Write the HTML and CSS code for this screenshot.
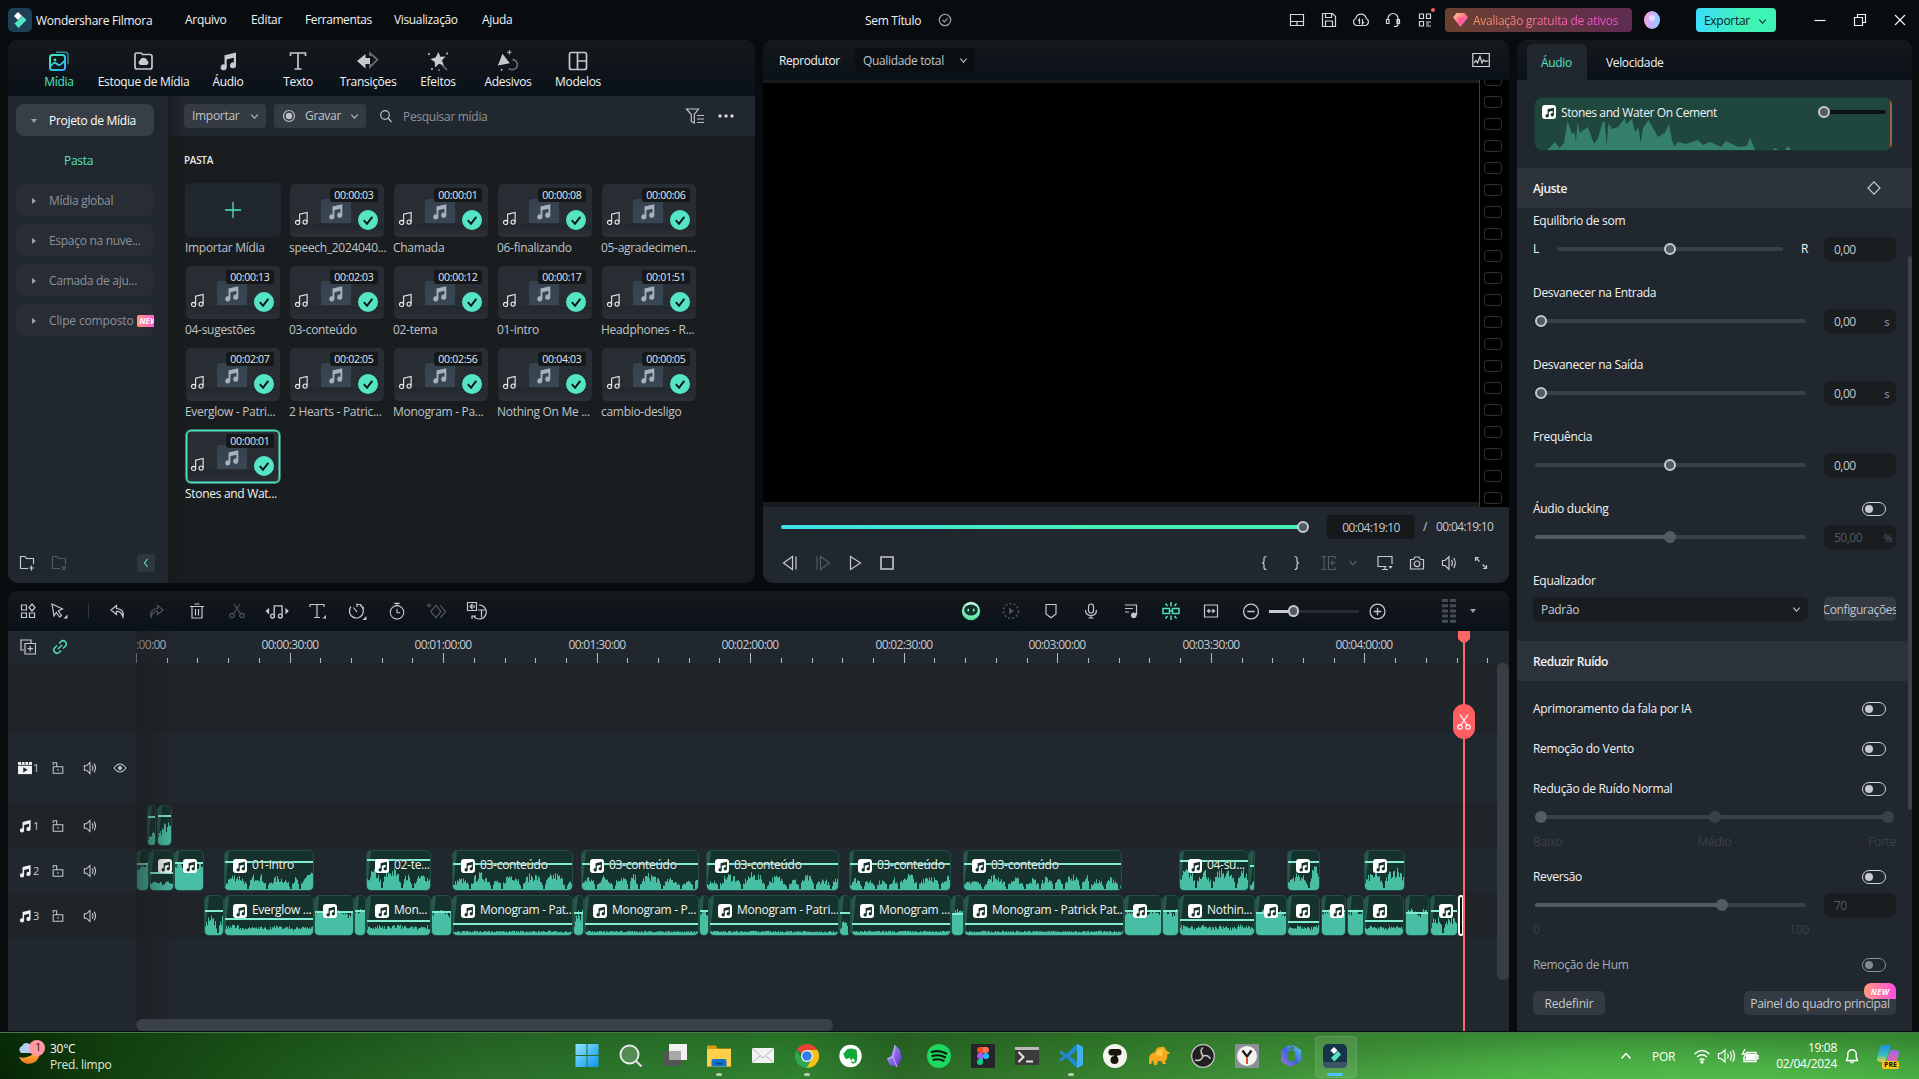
FILE: index.html
```html
<!DOCTYPE html>
<html lang="pt-BR">
<head>
<meta charset="utf-8">
<title>Wondershare Filmora</title>
<link rel="stylesheet" href="styles.css">
</head>
<body>
<svg class="sprite" aria-hidden="true">
  <defs>
    <linearGradient id="gMedia" x1="0" y1="0" x2="1" y2="1"><stop offset="0" stop-color="#3cf0b8"/><stop offset="1" stop-color="#35a7ff"/></linearGradient>
    <linearGradient id="gGem" x1="0" y1="0" x2="1" y2="1"><stop offset="0" stop-color="#ffd08a"/><stop offset=".5" stop-color="#ff6f91"/><stop offset="1" stop-color="#f63fd0"/></linearGradient>
    <linearGradient id="gMoon" x1="0" y1="0" x2="0" y2="1"><stop offset="0" stop-color="#ffc24a"/><stop offset="1" stop-color="#f07a1c"/></linearGradient>
    <linearGradient id="gWin" x1="0" y1="0" x2="1" y2="1"><stop offset="0" stop-color="#8fe6ff"/><stop offset="1" stop-color="#0b93f0"/></linearGradient>
    <linearGradient id="gObs" x1="0" y1="0" x2="1" y2="1"><stop offset="0" stop-color="#c0a4ff"/><stop offset="1" stop-color="#5a2fd0"/></linearGradient>
    <linearGradient id="gM365" x1="0" y1="1" x2="1" y2="0"><stop offset="0" stop-color="#b070e8"/><stop offset=".5" stop-color="#3f63d8"/><stop offset="1" stop-color="#5fd0f0"/></linearGradient>
    <linearGradient id="gCopA" x1="0" y1="0" x2="0" y2="1"><stop offset="0" stop-color="#1f8fe8"/><stop offset=".6" stop-color="#37c0c0"/><stop offset="1" stop-color="#e8d23a"/></linearGradient>
    <linearGradient id="gCopB" x1="0" y1="0" x2="0" y2="1"><stop offset="0" stop-color="#9a6be8"/><stop offset="1" stop-color="#ff5f9a"/></linearGradient>
    <radialGradient id="gBot" cx=".5" cy=".3" r=".8"><stop offset="0" stop-color="#ffffff"/><stop offset=".6" stop-color="#7df0b8"/><stop offset="1" stop-color="#2fd08a"/></radialGradient>
  </defs>
  <symbol id="chev" viewBox="0 0 10 10"><path d="M1.500 3 5 7l3.500-4"/></symbol>
  <symbol id="note" viewBox="0 0 20 20"><path class="f" d="M6.500 4.200 18 1.500v12.800a3 3 0 1 1-2.200-2.900V6.800L8.700 8.500v7.800a3 3 0 1 1-2.200-2.900z"/></symbol>
  <symbol id="noteo" viewBox="0 0 16 16"><path d="M6 12V3.500L14 1.500V11.500"/><circle cx="3.800" cy="12.200" r="2.200"/><circle cx="11.800" cy="11.800" r="2.200"/></symbol>
  <symbol id="check" viewBox="0 0 20 20"><circle cx="10" cy="10" r="10" fill="#55e5c5" stroke="none"/><path d="m5.800 10.200 3.200 3.600 5.300-7" fill="none" stroke="#0c1512" stroke-width="2"/></symbol>
  <symbol id="lock" viewBox="0 0 16 16"><path d="M2.500 6.500h11v7.500h-11zM2.500 4.500V2H6.500v4M8 9.200v2"/></symbol>
  <symbol id="spk" viewBox="0 0 16 16"><path d="M1.500 5.500H4l4-3.800v12.600L4 10.500H1.500zM10.500 5q1.800 3 0 6M12.700 3q3.200 5 0 10"/></symbol>
  <symbol id="headph" viewBox="0 0 16 16"><path d="M3 8V6.500a5 5 0 0 1 10 0v6q0 2-4 2M1.500 7.500H4v4H1.500zM12 7.500h2.500v4H12z"/></symbol>
</svg>

<header class="titlebar">
  <svg class="logo" viewBox="0 0 24 24"><rect width="24" height="24" rx="5" fill="#1f3f56"/><path d="m10 4 4 4-4 4-4-4z" fill="#fff"/><path d="m14.500 8 4 4-8 8-4-4.500z" fill="#52e5c2"/></svg>
  <span class="brand">Wondershare Filmora</span>
  <nav class="menu"><span>Arquivo</span><span>Editar</span><span>Ferramentas</span><span>Visualização</span><span>Ajuda</span></nav>
  <div class="doc"><span>Sem Título</span><svg class="i" width="14" height="14" viewBox="0 0 14 14"><circle cx="7" cy="7" r="5.700"/><path d="m4.600 7 1.800 1.800 3.200-3.500"/></svg></div>
  <div class="tools">
    <svg class="i" viewBox="0 0 16 16"><path d="M1.500 2.500h13v11h-13zM1.500 9.500h13M8 9.500v4"/></svg>
    <svg class="i" viewBox="0 0 16 16"><path d="M1.500 1.500h10l3 3v10h-13zM4.500 1.500v4h6v-4M4.500 14.500V9h7v5.500"/></svg>
    <svg class="i" viewBox="0 0 16 16"><path d="M3.500 13.500A3.700 3.700 0 0 1 2.800 6.500a5.300 5.300 0 0 1 10.400 0 3.700 3.700 0 0 1-.7 7zM6.500 12V7L5 9M9.500 7v5l1.500-2"/></svg>
    <svg class="i"><use href="#headph"/></svg>
    <span class="dotwrap"><svg class="i" viewBox="0 0 16 16"><path d="M2.500 2h4v4.500h-4zM9.500 2h4v4.500h-4zM2.500 9.500h4V14h-4zM9 10h5M9 12h3M9 14h5"/></svg><b></b></span>
  </div>
  <div class="trial"><svg width="15" height="14" viewBox="0 0 15 14"><path d="M3.500 0h8L15 4.500 7.500 14 0 4.500z" fill="url(#gGem)"/><path d="M4 4.500h7l-3.500 7z" fill="#ff4fa0" opacity=".6"/></svg><span>Avaliação gratuita de ativos</span></div>
  <div class="avatar"></div>
  <div class="export">Exportar<svg class="i" width="9" height="9"><use href="#chev"/></svg></div>
  <div class="winbtns">
    <svg class="i" viewBox="0 0 14 14"><path d="M1.500 7.500h11"/></svg>
    <svg class="i" viewBox="0 0 14 14"><path d="M1.500 4.500h8v8h-8zM4.500 4.500v-3h8v8h-3"/></svg>
    <svg class="i" viewBox="0 0 14 14"><path d="m2 2 10 10M12 2 2 12"/></svg>
  </div>
</header>

<main class="work">
  <section class="panel library">
    <nav class="tabs">
      <div class="tab on"><svg viewBox="0 0 22 22"><rect x="2" y="5" width="15" height="15" rx="2.500" fill="none" stroke="url(#gMedia)" stroke-width="2"/><path d="M8 2.200h9q3 0 3 3v9" fill="none" stroke="#2b8f8c" stroke-width="1.400"/><path d="M3 16q3-5 6-2t7-3" fill="none" stroke="url(#gMedia)" stroke-width="1.800"/><circle cx="7" cy="10" r="1.400" fill="#3ce0c8"/></svg><span>Mídia</span></div>
      <div class="tab wide"><svg viewBox="0 0 22 22"><path class="s" d="M2 4.500Q2 3 3.500 3H8l1.500 1.500h7.500q2 0 2 2V17q0 2-2 2H4q-2 0-2-2z"/><path class="f" d="M7.500 15a2.300 2.300 0 0 1-.6-4.400 3.700 3.700 0 0 1 7.200 0 2.300 2.300 0 0 1-.6 4.400z"/></svg><span>Estoque de Mídia</span></div>
      <div class="tab"><svg viewBox="0 0 20 20"><use href="#note"/></svg><span>Áudio</span></div>
      <div class="tab"><svg viewBox="0 0 22 22"><path class="s" d="M3.500 6V3h15v3M11 3v16M7.500 19h7"/></svg><span>Texto</span></div>
      <div class="tab"><svg class="xl" viewBox="0 0 24 22"><path class="s dim" d="M14 6V3l7.500 6.500L14 17v-3"/><path class="f" d="M9.500 4v4h4.500v6H9.500v4.500L1 11z"/></svg><span>Transições</span></div>
      <div class="tab"><svg viewBox="0 0 22 22"><path class="f" d="m11.500 2 1.800 4.800 5.200-.3-3.600 4 2.100 5-5-1.700L8 17.500l-.2-5.500-4.300-3 5-1.500z"/><path class="s dim" d="m15 15 5 5"/><g class="f"><circle cx="2" cy="4" r="1"/><circle cx="20" cy="3.500" r="1"/><circle cx="5" cy="19" r="1"/><circle cx="12" cy="20" r=".8"/></g></svg><span>Efeitos</span></div>
      <div class="tab"><svg class="xl" viewBox="0 0 24 24"><path class="f" d="M6 4 14 14.500 1 17z"/><path class="s dim" d="M17 10.500a5.500 5.500 0 1 1-4 9.500"/><circle class="f" cx="5" cy="21.500" r="1"/><path class="s thin" d="M13.500 0v5M11 2.500h5"/></svg><span>Adesivos</span></div>
      <div class="tab"><svg viewBox="0 0 22 22"><rect class="s" x="2.500" y="2.500" width="17" height="17" rx="2"/><path class="s" d="M10.500 3v16M11 11h8" /></svg><span>Modelos</span></div>
    </nav>
    <div class="libbody">
      <aside class="side">
        <div class="item sel"><i class="tri dn"></i>Projeto de Mídia</div>
        <div class="item plain">Pasta</div>
        <div class="item"><i class="tri"></i>Mídia global</div>
        <div class="item"><i class="tri"></i>Espaço na nuve...</div>
        <div class="item"><i class="tri"></i>Camada de aju...</div>
        <div class="item"><i class="tri"></i>Clipe composto<em>NEW</em></div>
        <div class="sidefoot">
          <svg class="i" viewBox="0 0 16 16"><path d="M9 13.500H1.500v-12H6l1.500 2h7V9M12.500 10.500v5M10 13h5"/></svg>
          <svg class="i off" viewBox="0 0 16 16"><path d="M9 13.500H1.500v-12H6l1.500 2h7V9M11 11l3.500 4M14.500 11 11 15"/></svg>
          <span class="collapse"><svg class="i" viewBox="0 0 10 10"><path d="M6.500 1 3.500 5l3 4"/></svg></span>
        </div>
      </aside>
      <div class="media">
        <div class="mbar">
          <div class="btn imp">Importar<svg class="i" width="9" height="9"><use href="#chev"/></svg></div>
          <div class="btn rec"><svg class="i" width="14" height="14" viewBox="0 0 14 14"><circle cx="7" cy="7" r="5.500"/><circle cx="7" cy="7" r="3.200" class="f"/></svg>Gravar<svg class="i" width="9" height="9"><use href="#chev"/></svg></div>
          <svg class="i mag" width="14" height="14" viewBox="0 0 14 14"><circle cx="6" cy="6" r="4.300"/><path d="m9 9 3.500 4"/></svg>
          <span class="ph">Pesquisar mídia</span>
          <svg class="i filt" width="20" height="18" viewBox="0 0 20 18"><path d="M1.500 2h12L9.300 7.500V16l-3-1.500v-7zM12 8.500h7M12 12h7M12 15.500h7"/></svg>
          <svg class="dots" width="18" height="6" viewBox="0 0 18 6"><circle cx="3" cy="3" r="1.700"/><circle cx="9" cy="3" r="1.700"/><circle cx="15" cy="3" r="1.700"/></svg>
        </div>
        <h3>PASTA</h3>
        <div class="grid" id="grid">
          <div class="cell"><div class="thumb add"><svg width="18" height="18" viewBox="0 0 18 18"><path d="M9 1v16M1 9h16"/></svg></div><p>Importar Mídia</p></div>
        </div>
      </div>
    </div>
  </section>

  <section class="panel player">
    <div class="phead"><b>Reprodutor</b><div class="qual">Qualidade total<svg class="i" width="9" height="9"><use href="#chev"/></svg></div><svg class="i scope" width="18" height="16" viewBox="0 0 18 16"><path d="M.8 1.500h16.500v13H.8z"/><path d="m2 11 2-2.500 1.500 2.500L8 4.500l2 6.500 1.500-3 2 1.500 3-1"/></svg></div>
    <div class="screen"><svg class="film" width="30" height="427"><defs><pattern id="perf" width="30" height="22" patternUnits="userSpaceOnUse" y="-6"><rect x="5.500" y=".5" width="17" height="11" rx="3" fill="none" stroke="#303335"/></pattern></defs><rect width="30" height="427" fill="url(#perf)"/><path d="M.5 0v427" stroke="#3c3f41"/></svg></div>
    <div class="pctl">
      <div class="seek"><div class="bar"><i></i></div><span class="tc">00:04:19:10</span><span class="sl">/</span><span class="num">00:04:19:10</span></div>
      <div class="keys">
        <svg class="i" viewBox="0 0 16 16"><path d="M10.500 1.500v13L1.500 8zM14 1.500v13"/></svg>
        <svg class="i off" viewBox="0 0 16 16"><path d="M5.500 1.500v13L14.500 8zM2 1.500v13"/></svg>
        <svg class="i" viewBox="0 0 16 16"><path d="M3.500 1.500v13L13.500 8z"/></svg>
        <svg class="i b" viewBox="0 0 16 16"><path d="M2 2h12v12H2z"/></svg>
        <span class="sp"></span>
        <svg class="i" viewBox="0 0 16 16"><path d="M10.500 1.500q-2.500 0-2.500 2v2.500q0 2-2 2 2 0 2 2v2.500q0 2 2.500 2"/></svg>
        <svg class="i" viewBox="0 0 16 16"><path d="M6.500 1.500q2.500 0 2.500 2v2.500q0 2 2 2-2 0-2 2v2.500q0 2-2.500 2"/></svg>
        <svg class="i off" viewBox="0 0 16 16"><path d="M1.500 1.500h5M4 1.500v13M1.500 14.500h5M15 4V1.500H8.500v13H15V12M15.500 8H11m2-2-2 2 2 2"/></svg>
        <svg class="i off sm" viewBox="0 0 10 10"><use href="#chev"/></svg>
        <svg class="i" viewBox="0 0 16 16"><path d="M9.500 11.500H1V1.500h14V9M8 11.500V14M5 14.500h6"/><path class="f" d="M11.500 11h4l-2 3z"/></svg>
        <svg class="i" viewBox="0 0 16 16"><path d="M1.500 4.500h3l1.500-2.500h4l1.500 2.500h3v9.500h-13z"/><circle cx="8" cy="8.800" r="2.800"/></svg>
        <svg class="i"><use href="#spk"/></svg>
        <svg class="i" viewBox="0 0 16 16"><path d="M2.500 6V2.500H6M2.500 2.500l4 4M13.500 10v3.500H10M13.500 13.500l-4-4"/></svg>
      </div>
    </div>
  </section>

  <section class="panel props">
    <nav class="ptabs"><span class="on">Áudio</span><span>Velocidade</span></nav>
    <div class="pbody">
      <div class="clipcard">
        <svg class="wavebg" width="358" height="52" viewBox="0 0 358 52"><path d="M12.500 52 20 44l4.700 6L29 45l3.500-22L37 36l2.400-2L41 44l1.400-19L45 35l3.500-3L53 29l6 17 4-6 5-17 2 2 1.500 24 2-24L77 31l6-2 7-9 1 6 6-5 3 13 3.500-4 2.200 15L108 30l5.500-8L123 39l6.500-4 4.500-9 3 16 2.400 7 3.100-5 8.500 2 12-4 5 5 7-3 11 5 5-6 12 6 9-1 3-8 3 7 2 5zM238 52l2-2 4 2zM250 52l3-4 3 4z"/></svg>
        <span class="mi"><svg viewBox="0 0 20 20"><use href="#note"/></svg></span><span class="cn">Stones and Water On Cement</span><span class="vol"><i></i></span>
        <span class="edge"></span>
      </div>
      <h4>Ajuste<svg class="i" width="16" height="16" viewBox="0 0 16 16"><path d="m8 1.800 6 6.200-6 6.200L2 8z"/></svg></h4>
      <div class="prop"><label>Equilíbrio de som</label><div class="row"><small>L</small><div class="sld bal"><i style="left:50%"></i></div><small class="r">R</small><span class="val">0,00</span></div></div>
      <div class="prop"><label>Desvanecer na Entrada</label><div class="row"><div class="sld"><i style="left:2.200%"></i></div><span class="val">0,00<u>s</u></span></div></div>
      <div class="prop"><label>Desvanecer na Saída</label><div class="row"><div class="sld"><i style="left:2.200%"></i></div><span class="val">0,00<u>s</u></span></div></div>
      <div class="prop"><label>Frequência</label><div class="row"><div class="sld"><i style="left:49.800%"></i></div><span class="val">0,00</span></div></div>
      <div class="prop dis"><label>Áudio ducking<s></s></label><div class="row"><div class="sld"><q style="width:50%"></q><i style="left:49.800%"></i></div><span class="val">50,00<u>%</u></span></div></div>
      <div class="prop"><label>Equalizador</label><div class="row eq"><div class="select">Padrão<svg class="i" width="9" height="9"><use href="#chev"/></svg></div><span class="cfg">Configurações</span></div></div>
      <h4 class="second">Reduzir Ruído</h4>
      <div class="tg first">Aprimoramento da fala por IA<s></s></div>
      <div class="tg">Remoção do Vento<s></s></div>
      <div class="tg">Redução de Ruído Normal<s></s></div>
      <div class="steps"><i></i><i></i><i></i></div>
      <div class="marks"><span>Baixo</span><span>Médio</span><span>Forte</span></div>
      <div class="tg rev">Reversão<s></s></div>
      <div class="row dis low"><div class="sld"><q style="width:69%"></q><i style="left:69%"></i></div><span class="val">70</span></div>
      <div class="marks short"><span>0</span><span>100</span></div>
      <div class="tg hum">Remoção de Hum<s></s></div>
      <div class="scroll"></div>
    </div>
    <footer class="pfoot"><span>Redefinir</span><span class="kf">Painel do quadro principal<em>NEW</em></span></footer>
  </section>

  <section class="panel timeline">
    <div class="tbar">
      <svg class="i n" viewBox="0 0 16 16"><path d="M1.500 2h5v5h-5zM1.500 10h5v4.500h-5zM9.500 10h5v4.500h-5zM12 1l3 3.500-3 3.500-3-3.500z"/></svg>
      <svg class="i n" viewBox="0 0 18 16"><path d="m1 1 10.500 5-4.200 2 3.200 4.500-2 1.500-3.200-4.500L3 13z"/><path class="f" d="M16.500 11.500v4h-4z"/></svg>
      <i class="vr"></i>
      <svg class="i" viewBox="0 0 16 16"><path d="M7.500 2.500 2 7l5.500 4.500v-3q4.500-.5 6.500 5.500 1.500-8-6.500-8.500z"/></svg>
      <svg class="i off" viewBox="0 0 16 16"><path d="M8.500 2.500 14 7l-5.500 4.500v-3q-4.500-.5-6.500 5.500-1.500-8 6.500-8.500z"/></svg>
      <svg class="i" viewBox="0 0 16 16"><path d="M1 3.500h14M5.500 1h5M3 3.500V15h10V3.500M6.500 6v6.500M9.500 6v6.500"/></svg>
      <svg class="i off" viewBox="0 0 16 16"><circle cx="3" cy="12.500" r="2.200"/><circle cx="13" cy="12.500" r="2.200"/><path d="M4.500 10.500 11 1M11.500 10.500 5 1"/></svg>
      <svg class="i big" viewBox="0 0 22 16"><path d="M8.500 12V3.500h7V12"/><circle cx="7" cy="12.500" r="1.700"/><circle cx="14" cy="12.500" r="1.700"/><path class="f" d="M4 5v6L.8 8zM18.500 5v6l3-3z"/></svg>
      <svg class="i" viewBox="0 0 18 16"><path d="M2 4V1.500h14V4M9 1.500v12.500M6 14.500h6"/><path class="f" d="M18 12v3.500h-3.500z"/></svg>
      <svg class="i big" viewBox="0 0 20 18"><path d="M4 4.500A7 7 0 1 0 10 2v3M10 10 6.500 5.500"/><path d="M13 2.500a7 7 0 0 1 4 5" stroke-dasharray="2 1.500"/><path class="f" d="M19.500 14v4h-4z"/></svg>
      <svg class="i big" viewBox="0 0 18 20"><circle cx="9" cy="11.500" r="7.500"/><path d="M6 1.500h6M9 1.500v3M9 7.500v4.500h3.500"/></svg>
      <svg class="i off big" viewBox="0 0 20 16"><path d="m9 3 4.500 5.500L9 14 4.500 8.500zM13 3l4.500 5.500L13 14M1 3h4M3 1v4"/></svg>
      <svg class="i huge" viewBox="0 0 24 22"><path d="M2.500 2.500h9v8h-9zM7 4.500 5 6.500l2 2zM9 5v3"/><path d="M14 5a7 7 0 1 1-5.500 11M11 16H7v3M13 10h7M16.500 10v7"/></svg>
      <span class="sp"></span>
      <svg class="huge" viewBox="0 0 24 24"><circle cx="12" cy="12" r="10" fill="url(#gBot)"/><ellipse cx="12" cy="11" rx="7.500" ry="6" fill="#12332b"/><path d="M9 9.500v3M15 9.500v3" stroke="#7dffc8" stroke-width="1.600"/></svg>
      <svg class="i off big" viewBox="0 0 18 18"><circle cx="9" cy="9" r="7.500" stroke-dasharray="2 2.200" stroke-width="1.600"/><path class="f" d="M7 5.500 12 9l-5 3.500z"/></svg>
      <svg class="i" viewBox="0 0 16 16"><path d="M3 1.500h10V11l-5 3.800L3 11z"/></svg>
      <svg class="i" viewBox="0 0 16 16"><rect x="5.500" y="1" width="5" height="9" rx="2.500"/><path d="M2.500 7q0 5.500 5.500 5.500T13.500 7M8 12.500V15M5.500 15h5"/></svg>
      <svg class="i" viewBox="0 0 16 16"><path d="M2 2h11M2 5.500h8M2 9h4M13.500 1.500V12"/><circle class="f" cx="10.800" cy="12.200" r="2.800"/></svg>
      <svg class="i grn big" viewBox="0 0 18 18"><path d="M1 6.500h6.500v5H1zM10.500 6.500H17v5h-6.500zM7 9h4M9 0v4.500M9 13.500V18M3.500 1.500l2 2.500M14.500 1.500l-2 2.500M3.500 16.500l2-2.500M14.500 16.500l-2-2.500" stroke-width="1.500"/></svg>
      <svg class="i" viewBox="0 0 16 16"><path d="M1.500 2h13v12h-13z"/><path class="f" d="M6.500 5.500v5L3.500 8zM9.500 5.500v5l3-2.500z"/><path d="M6 8h4"/></svg>
      <svg class="i zo" viewBox="0 0 16 16"><circle cx="8" cy="8" r="7"/><path d="M4.500 8h7"/></svg>
      <div class="zoom"><q></q><i></i></div>
      <svg class="i zi" viewBox="0 0 16 16"><circle cx="8" cy="8" r="7"/><path d="M4.500 8h7M8 4.500v7"/></svg>
      <svg class="meter" width="14" height="24" viewBox="0 0 14 24"><path d="M3 0v24M11 0v24" stroke="#454b52" stroke-width="6" stroke-dasharray="3 2.200"/></svg>
      <i class="tri dn"></i>
    </div>
    <div class="tbody">
      <div class="heads">
        <div class="h0"><svg class="i" viewBox="0 0 16 16"><path d="M4 11H1V1h10v3M5 4.500h10.500v10.500H5zM10.200 7v5.500M7.500 9.700H13"/></svg><svg class="i grn" viewBox="0 0 16 16"><path d="M7 4.500 9 2.500a3.200 3.200 0 0 1 4.500 4.500L11 9.500M9 11.500l-2 2A3.200 3.200 0 0 1 2.500 9L5 6.500M6 10l4-4" stroke-width="1.500"/></svg></div>
        <div class="h1"></div>
        <div class="h2"><svg class="ic" viewBox="0 0 16 16"><path class="f" d="M0 1h16v14H0z"/><path d="M0 5h16M4 1v3M8 1v3M12 1v3" stroke="#21272e"/><path d="M6 7v6l5-3z" fill="#21272e"/></svg><span>1</span><svg class="i lk"><use href="#lock"/></svg><svg class="i sk"><use href="#spk"/></svg><svg class="i ey" viewBox="0 0 14 14"><path d="M1 7q6-8 12 0-6 8-12 0z"/><circle class="f" cx="7" cy="7" r="2"/></svg></div>
        <div class="h3 dk"><svg class="ic" viewBox="0 0 20 20"><use href="#note"/></svg><span>1</span><svg class="i lk"><use href="#lock"/></svg><svg class="i sk"><use href="#spk"/></svg></div>
        <div class="h3"><svg class="ic" viewBox="0 0 20 20"><use href="#note"/></svg><span>2</span><svg class="i lk"><use href="#lock"/></svg><svg class="i sk"><use href="#spk"/></svg></div>
        <div class="h3 dk"><svg class="ic" viewBox="0 0 20 20"><use href="#note"/></svg><span>3</span><svg class="i lk"><use href="#lock"/></svg><svg class="i sk"><use href="#spk"/></svg></div>
      </div>
      <div class="lanes">
        <div class="ruler" id="ruler"></div>
        <div class="lane empty"></div>
        <div class="lane video"></div>
        <div class="lane dk" id="a1"></div>
        <div class="lane" id="a2"></div>
        <div class="lane dk" id="a3"></div>
        <div class="shade"></div>
        <div class="vs"></div>
        <div class="hs"></div>
        <div class="playhead"><svg class="ph1" width="12" height="14" viewBox="0 0 12 14"><path d="M0 0h12v8l-6 5-6-5z"/></svg><span class="cut"><svg width="16" height="18" viewBox="0 0 16 18"><circle cx="4" cy="14" r="2.200"/><circle cx="12" cy="14" r="2.200"/><path d="M5 12 12 1.500M11 12 4 1.500"/></svg></span></div>
      </div>
    </div>
  </section>
</main>

<footer class="taskbar">
  <div class="weather"><svg width="30" height="30" viewBox="0 0 30 30"><path d="M22 9a9.500 9.500 0 1 1-20 8q10 3 20-8z" fill="url(#gMoon)"/><path d="M4 13a4 4 0 0 1 1-7 5 5 0 0 1 9-.5 4 4 0 0 1 1 7.500z" fill="#b9cdf2"/><circle cx="20" cy="8" r="8" fill="#ff9aa2"/></svg><b>1</b><div><p>30°C</p><p>Pred. limpo</p></div></div>
  <div class="apps">
    <span><svg viewBox="0 0 24 24"><path d="M.500 0h11v11H.500zM12.500 0h11v11h-11zM.500 12h11v11H.500zM12.500 12h11v11h-11z" fill="url(#gWin)"/></svg></span>
    <span><svg viewBox="0 0 24 24"><circle cx="10.500" cy="10.500" r="9" fill="#ffffff33" stroke="#e6ebe6" stroke-width="2"/><path d="m17 17 5.500 5.500" stroke="#d8d8d8" stroke-width="2.400"/></svg></span>
    <span><svg viewBox="0 0 24 24"><path d="M0 7h18v15H0z" fill="#555"/><path d="M6 0h18v16H6z" fill="#f1f1f1"/><path d="M6 7h12v9H6z" fill="#a8a8a8"/></svg></span>
    <span class="run"><svg viewBox="0 0 24 24"><path d="M0 1.500h9l1.500 3H24v18H0z" fill="#d99a10"/><path d="M0 5h24v17.500H0z" fill="#ffcf4a"/><path d="M4.500 17q0-2 2-2h11q2 0 2 2v5.500h-15z" fill="#1274d0"/><path d="M8 18.500h8v2H8z" fill="#0b4f96"/></svg></span>
    <span><svg viewBox="0 0 24 24"><path d="M1 4h22v15H1z" fill="#f3f3f3"/><path d="m1 4 11 10L23 4M1 19l8-7M23 19l-8-7" fill="none" stroke="#b5b5b5"/></svg></span>
    <span class="run"><svg viewBox="0 0 24 24"><path d="M12 12 1.600 6A12 12 0 0 1 22.400 6z" fill="#ea4335"/><path d="M12 12V6h10.400A12 12 0 0 1 12 24z" fill="#fbc116"/><path d="M1.600 6A12 12 0 0 0 11.500 24l5.500-9-5-3-5 3z" fill="#2fa84f"/><circle cx="12" cy="12" r="6" fill="#fff"/><circle cx="12" cy="12" r="4.800" fill="#2f7de8"/></svg></span>
    <span><svg viewBox="0 0 24 24"><circle cx="11.500" cy="12" r="11.200" fill="#fff"/><path d="M4.500 9.500 8.500 5q5-1.500 9 1 1.500 5 .5 10-1 4-4.500 3.500-2-1-1-3l1.500 1.500h1.500q.5-3-1.500-3.500-2 2-3 1v-2q-3 2-4.500 1-2-2-2-5z" fill="#0fa83c"/></svg></span>
    <span><svg viewBox="0 0 24 24"><path d="M12 1 17 6l1.500 9-4.500 8-7-2-3-6 4-3z" fill="url(#gObs)"/><path d="m12 1-2 12 4 10M10 13l-6 2" stroke="#d8c8ff" fill="none" stroke-width=".8"/></svg></span>
    <span><svg viewBox="0 0 24 24"><circle cx="12" cy="12" r="12" fill="#1ed760"/><path d="M4.800 8q7-2.500 14.500 1.500M5.500 12q6.500-2 12.500 1.300M6.500 15.800q5-1.500 10 1" fill="none" stroke="#0b1a10" stroke-width="2.200" stroke-linecap="round"/></svg></span>
    <span><svg viewBox="0 0 24 24"><rect width="24" height="24" rx="1" fill="#262329"/><path d="M12 3H9a3 3 0 0 0 0 6h3z" fill="#f24e1e"/><path d="M12 3h3a3 3 0 0 1 0 6h-3z" fill="#ff7262"/><path d="M12 9H9a3 3 0 0 0 0 6h3z" fill="#a259ff"/><circle cx="15" cy="12" r="3" fill="#1abcfe"/><path d="M12 15H9a3 3 0 1 0 3 3z" fill="#0acf83"/></svg></span>
    <span><svg viewBox="0 0 24 24"><path d="M0 3h24v18H0z" fill="#3a3a3a"/><path d="M0 3h24v3H0z" fill="#b9b9b9"/><path d="m3.500 8 5 5-5 5M11 17.500h7" fill="none" stroke="#e8e8e8" stroke-width="2"/></svg></span>
    <span class="run"><svg viewBox="0 0 24 24"><path d="m18 0 6 3v18l-6 3L7 13.500l-4.500 4L0 16l4.500-4L0 8l2.500-1.500 4.500 4z" fill="#1f8ad8"/><path d="M18 6.500v11L10.500 12z" fill="#2f7a2e"/><path d="m18 0 6 3v18l-6 3z" fill="#3fb0f5"/></svg></span>
    <span><svg viewBox="0 0 24 24"><circle cx="12" cy="12" r="12" fill="#f4f4ee"/><rect x="5.500" y="5" width="13" height="6.500" rx="3" fill="#17150f"/><path d="M11 11h3v3h-3z" fill="#17150f"/><circle cx="11.500" cy="16" r="4" fill="#17150f"/></svg></span>
    <span><svg viewBox="0 0 24 24"><path d="M2 16q0-7 6-8 1-5 6-5 4-1 5 3l4 3-3 2q1 4-2 6l1 3h-3l-2-3h-3l-1 4H7l-1-5-2 4H2z" fill="#f5a81c"/><path d="M9 11q1-6 7-6l-1 7z" fill="#ffc94d"/></svg></span>
    <span><svg viewBox="0 0 24 24"><circle cx="12" cy="12" r="11.300" fill="#231f20" stroke="#c8c8c8" stroke-width="1.200"/><path d="M12 3.500q-4 3 0 8.500 5-2 7.500 3M12 12q-2 6-8 4" fill="none" stroke="#c8c8c8" stroke-width="1.500"/></svg></span>
    <span><svg viewBox="0 0 24 24"><rect width="24" height="24" rx="1" fill="#8b9096"/><circle cx="12" cy="12" r="10" fill="#f1f1f1"/><path d="m7.500 6.500 4.500 6 4.500-6" fill="none" stroke="#222" stroke-width="2.400"/><path d="M12 13v7" stroke="#d8542a" stroke-width="2"/></svg></span>
    <span><svg viewBox="0 0 24 24"><path d="M10 1 2 6v11l5 4 5-3-3-2V8l7-4zM14 1l8 5v11l-10 6-5-2.500 9-4.500V8l-5-3z" fill="url(#gM365)"/></svg></span>
    <span class="act"><svg viewBox="0 0 24 24"><rect width="24" height="24" rx="5" fill="#17354a"/><path d="m11 3 3.500 3.500L11 10 7.500 6.500z" fill="#fff"/><path d="m15 7 3 3.500-6.500 7L8 14z" fill="#52e5c2"/><path d="M0 18h24v1q0 5-5 5H5q-5 0-5-5z" fill="#3b5468"/></svg></span>
  </div>
  <div class="tray">
    <svg class="w tc1" width="12" height="8" viewBox="0 0 12 8"><path d="m1.500 6.500 4.500-5 4.500 5"/></svg><span class="por">POR</span>
    <svg class="w" width="18" height="16" viewBox="0 0 18 16"><path d="M1.500 6q7.500-7 15 0M4 9q5-4.500 10 0M6.500 12q2.500-2 5 0"/><circle cx="9" cy="14" r="1" fill="#fff"/></svg>
    <svg class="w" width="18" height="16" viewBox="0 0 18 16"><path d="M1.500 5.500H4l4-3.500v12l-4-3.500H1.500zM10.500 5.500q1.500 2.500 0 5M13 3.500q3 4.500 0 9M15.500 2q4 6 0 12" stroke-width="1.200"/></svg>
    <svg class="w" width="18" height="16" viewBox="0 0 18 16"><path d="M5 4.500h10v9H3V10M15.500 7.500h1.500v3h-1.500"/><path d="M6 6.500h7.500v5H5z" fill="#fff"/><path d="M4 1 1.500 6H5L2.500 10" fill="none"/></svg>
    <div class="clock"><p>19:08</p><p>02/04/2024</p></div>
    <svg class="w bell" width="14" height="16" viewBox="0 0 14 16"><path d="M1.500 12.500 2.800 9V6a4.200 4.200 0 0 1 8.400 0v3l1.300 3.500zM5 13q2 3.500 4 0"/></svg>
    <span class="cop"><svg width="24" height="22" viewBox="0 0 24 22"><path d="M7 0h8l-5 15q-1 2-4 2-6 0-5-4L4 3q1-3 3-3z" fill="url(#gCopA)"/><path d="M17 5q6-1 6 4l-2 7q-1 5-5 5H9l4-13q1-3 4-3z" fill="url(#gCopB)"/></svg><b>PRE</b></span>
  </div>
</footer>
<script src="app.js"></script>
</body>
</html>
```
FILE: styles.css
```css
* { box-sizing: border-box; margin: 0; padding: 0; }
body { width: 1919px; height: 1079px; overflow: hidden; background: #080c0f; color: #f1f3f5; font: 12px/16px "Open Sans", "Noto Sans", sans-serif; letter-spacing: -.3px; display: flex; flex-direction: column; white-space: nowrap; }
i, em, u, s, q { font-style: normal; text-decoration: none; display: block; }
q::before, q::after { content: none; }
.sprite { position: absolute; width: 0; height: 0; }
.i { fill: none; stroke: currentColor; stroke-width: 1.2; flex: none; }
.f { fill: currentColor; stroke: none; }
.sp { flex: 1; }
.off { color: #545b62; }
.num, .tc { letter-spacing: -.64px; }
.tri { width: 0; height: 0; border: 3.5px solid transparent; border-left: 4px solid #9aa0a6; border-right: 0; flex: none; }
.tri.dn { border: 3px solid transparent; border-top: 4px solid #9aa0a6; border-bottom: 0; }

/* title bar */
.titlebar { height: 40px; flex: none; display: flex; align-items: center; padding-left: 8px; }
.logo { width: 24px; height: 24px; }
.brand { width: 149px; padding: 2px 0 0 4px; letter-spacing: -.26px; }
.menu { display: flex; gap: 24px; width: 680px; padding-left: 4px; }
.menu span:nth-child(1) { width: 42px; }
.menu span:nth-child(2) { width: 30px; }
.menu span:nth-child(3) { width: 65px; letter-spacing: -.4px; }
.menu span:nth-child(4) { width: 64px; letter-spacing: -.35px; }
.doc { display: flex; align-items: center; width: 420px; padding-left: 4px; }
.doc span { width: 73px; padding-top: 2px; }
.doc svg { color: #9ba1a7; }
.tools { display: flex; width: 164px; gap: 16px; padding-left: 8px; color: #d5d9dc; }
.tools svg { width: 16px; height: 16px; display: block; }
.dotwrap { position: relative; }
.dotwrap b { position: absolute; right: -2px; top: -4px; width: 4px; height: 4px; border-radius: 2px; background: #ff5a5f; }
.trial { width: 187px; height: 24px; border-radius: 4px; background: linear-gradient(90deg, #6a4030, #5e2c50); display: flex; align-items: center; padding-left: 8px; gap: 5px; }
.trial span { background: linear-gradient(90deg, #ff9a62, #ff6aa0 50%, #f04fe6); -webkit-background-clip: text; color: transparent; padding-top: 2px; letter-spacing: -.27px; }
.avatar { width: 16px; height: 18px; margin: 0 36px 0 12px; border-radius: 50%; background: radial-gradient(circle at 50% 40%, #fff8 20%, transparent 25%), linear-gradient(100deg, #ffa0d8, #c8b0ff 50%, #7ad8ff); }
.export { width: 80px; height: 24px; border-radius: 4px; background: linear-gradient(100deg, #3ddcff, #3ff3b4 60%); color: #10231e; display: flex; align-items: center; justify-content: space-between; padding: 2px 9px 0 8px; }
.winbtns { display: flex; gap: 26px; margin-left: 37px; }
.winbtns svg { width: 14px; height: 14px; }

/* workspace */
.work { height: 991px; flex: none; display: grid; grid-template: 543px 440px / 747px 746px 395px; gap: 8px; padding-left: 8px; }
.panel { background: #21272e; border-radius: 10px; overflow: hidden; display: flex; flex-direction: column; }
.player { grid-column: 2; }
.props { grid-column: 3; grid-row: 1 / 3; border-radius: 10px 10px 0 0; }
.timeline { grid-column: 1 / 3; grid-row: 2; border-radius: 10px 10px 0 0; }
.tabs, .phead, .ptabs, .tbar { background: linear-gradient(#15191c, #0a1119); flex: none; display: flex; }
.tabs { height: 56px; padding-left: 16px; }
.tab { width: 70px; display: flex; flex-direction: column; align-items: center; color: #f1f3f5; }
.tab.wide { width: 99px; }
.tab svg { width: 22px; height: 22px; margin: 10px 0 2px; color: #c5cad1; }
.tab svg:not([viewBox="0 0 22 22"]) { width: 20px; }
.tab svg.xl { width: 24px; }
.tab.on span { color: #50e3c2; }
.s { fill: none; stroke: currentColor; stroke-width: 1.7; }
.s.thin { stroke-width: 1; }
.dim { opacity: .5; }
.libbody { flex: 1; display: flex; }
.side { width: 160px; padding: 8px 0 0 8px; display: flex; flex-direction: column; gap: 8px; }
.item { width: 138px; height: 32px; border-radius: 8px; background: #282c34; color: #8d9399; display: flex; align-items: center; padding: 1px 0 0 16px; overflow: hidden; }
.item .tri { margin-right: 13px; }
.item .tri.dn { margin: 0 12px 0 -1px; }
.item.sel { background: #383e45; color: #fff; letter-spacing: -.3px; }
.item.plain { background: none; color: #50e3c2; padding-left: 48px; }
.item em, .kf em { background: linear-gradient(90deg, #ff9a7a, #ff4fe0); color: #fff; font: italic bold 8px/12px "Open Sans", sans-serif; letter-spacing: 0; }
.item em { padding-left: 3px; margin-left: 3px; border-radius: 2px; width: 30px; }
.item:nth-child(6) { letter-spacing: -.15px; }
.sidefoot { display: flex; align-items: center; gap: 16px; margin-top: auto; padding: 0 13px 11px 3px; color: #c5cad1; }
.sidefoot > svg { width: 16px; height: 16px; }
.sidefoot .off { color: #545b62; }
.collapse { width: 18px; height: 18px; border-radius: 3px; background: #30363d; color: #50e3c2; margin-left: auto; display: grid; place-items: center; }
.collapse svg { width: 10px; height: 10px; }
.media { flex: 1; background: linear-gradient(90deg, #16191b, #1a1d1f 16px); }
.mbar { height: 40px; background: linear-gradient(90deg, #1a1f22, #21272e 16px); display: flex; align-items: center; padding-left: 16px; color: #bfc4c9; }
.btn { height: 24px; border-radius: 4px; background: #343a41; display: flex; align-items: center; padding: 0 7px 0 8px; justify-content: space-between; }
.imp { width: 82px; margin-right: 8px; }
.rec { width: 92px; }
.mag { margin: 0 10px 0 13px; }
.ph { color: #8d9399; width: 282px; padding-top: 2px; }
.filt { margin-right: 12px; }
.dots { fill: #d5d9dc; }
h3 { font: 600 10px/16px "Open Sans", sans-serif; letter-spacing: -.3px; margin: 16px 0 15px 16px; color: #e6e9eb; }
.grid { display: grid; grid-template-columns: repeat(5, 104px); grid-auto-rows: 82px; padding-left: 18px; }
.cell { margin-left: -1px; }
.thumb { width: 94px; height: 53px; margin-left: .5px; border-radius: 5px; background: linear-gradient(#272d33 75%, #22282d 78%, #2b3137); position: relative; margin-top: 1px; }
.thumb.add { width: 96px; height: 54px; margin: 0; background: #21272e; display: grid; place-items: center; }
.add path { stroke: #50e3c2; stroke-width: 1.3; }
.thumb.sel { box-shadow: 0 0 0 1.5px #50e3c2 inset, 0 0 0 .5px #50e3c2; }
.cell p { color: #bfc4c9; padding-top: 3px; width: 100px; }
.cell p.on { color: #f1f3f5; }
.thumb .t { position: absolute; right: 6px; top: 4px; height: 14px; padding: 0 4px; border-radius: 3px; background: #15181a; font-size: 10.5px; line-height: 14px; letter-spacing: -.3px; color: #e6e9eb; }
.thumb .sq { position: absolute; left: 31px; top: 15px; width: 30px; height: 24px; border-radius: 3px 3px 1px 1px; background: linear-gradient(#36424e, #3b4754); display: grid; place-items: center; color: #a7b2bf; }
.sq svg { width: 17px; height: 17px; }
.thumb .no { position: absolute; left: 4px; top: 27px; width: 15px; height: 15px; color: #e6e9eb; }
.thumb .ck { position: absolute; right: 6px; top: 26px; width: 20px; height: 20px; }

/* player */
.phead { height: 40px; align-items: center; padding-left: 16px; }
.phead b { font-weight: 400; width: 76px; padding-top: 2px; letter-spacing: -.4px; }
.qual { width: 120px; height: 24px; border-radius: 4px; background: #0b0f12; color: #bfc4c9; display: flex; align-items: center; justify-content: space-between; padding: 1px 7px 0 8px; letter-spacing: -.35px; }
.scope { margin: 0 19px 0 auto; color: #d5d9dc; }
.screen { height: 427px; background: #000; border-top: 3px solid #181c1f; border-bottom: 5px solid #181c1f; position: relative; }
.film { position: absolute; right: 0; top: -3px; background: #000; }
.pctl { flex: 1; }
.seek { display: flex; align-items: center; height: 24px; margin-top: 8px; padding-left: 18px; color: #c5cad1; }
.bar { width: 522px; height: 4px; border-radius: 2px; background: linear-gradient(90deg, #3de0e8, #46f0b4 60%); position: relative; }
.bar i, .sld i, .vol i, .zoom i { position: absolute; width: 12px; height: 12px; border-radius: 6px; border: 2px solid #c5cad1; background: #545b62; top: 50%; margin: -6px 0 0 -6px; }
.bar i { left: 100%; }
.tc { width: 88px; height: 24px; border-radius: 4px; background: #15191c; margin-left: 24px; text-align: center; line-height: 25px; }
.sl { margin: 0 7px 0 8px; width: 6px; }
.keys { display: flex; align-items: center; height: 24px; margin-top: 12px; padding: 0 12px 0 12px; color: #c5cad1; }
.keys svg { width: 32px; height: 16px; }
.keys .b { stroke-width: 1.6; }
.keys svg:first-child { margin-right: 1px; margin-left: -1px; }
.keys .off { color: #545b62; }
.keys .sm { width: 16px; height: 10px; margin: 0 8px 0 1px; }

/* properties */
.ptabs { height: 40px; padding: 4px 0 0 10px; gap: 0; }
.ptabs span { height: 36px; line-height: 38px; padding: 0 19px; letter-spacing: -.35px; }
.ptabs .on { width: 60px; background: #21272e; color: #50e3c2; border-radius: 6px 6px 0 0; padding: 0 14px; }
.pbody { height: 895px; position: relative; overflow: hidden; letter-spacing: -.3px; }
.clipcard { width: 359px; height: 54px; margin: 17px 0 17px 17px; border-radius: 8px; background: #1f473e; border: 1px solid #17362f; position: relative; display: flex; padding: 7px 0 0 7px; overflow: hidden; }
.edge { position: absolute; right: 0; top: 0; width: 2px; height: 54px; background: #a5574d; }
.wavebg { position: absolute; left: 0; bottom: 0; fill: #35806d; }
.mi { width: 14px; height: 14px; border-radius: 3px; background: #fff; display: grid; place-items: center; flex: none; color: #14302a; position: relative; }
.mi svg { width: 11px; height: 11px; }
.clipcard .cn { margin-left: 5px; position: relative; letter-spacing: -.38px; }
.vol { position: absolute; left: 287px; top: 12px; width: 64px; height: 4px; border-radius: 2px; background: #0b1412; }
.vol i { left: 2px; }
h4 { height: 40px; background: #2d333a; padding: 0 30px 0 16px; font: 600 12px/41px "Open Sans", sans-serif; letter-spacing: -.42px; display: flex; justify-content: space-between; align-items: center; }
h4 svg { color: #c5cad1; }
h4.second { margin-top: 1px; }
.prop { height: 72px; padding-left: 16px; }
.prop label { height: 26px; line-height: 26px; display: flex; justify-content: space-between; align-items: center; padding-right: 26px; }
.row { display: flex; align-items: center; height: 30px; padding-right: 16px; }
.row small { font-size: 12px; width: 24px; }
.row .r { width: 23px; padding-left: 0; margin-left: 18px; }
.sld { width: 271px; height: 4px; border-radius: 2px; background: #3a4049; margin: 0 auto 0 2px; position: relative; }
.sld.bal { width: 226px; margin: 0; }
.sld q { height: 4px; border-radius: 2px; background: #545b62; }
.dis .sld i { background: #545b62; border-color: #545b62; }
.val { width: 72px; height: 24px; flex: none; border-radius: 5px; background: #191d20; color: #c5cad1; padding: 1px 7px 0 10px; line-height: 24px; display: flex; justify-content: space-between; letter-spacing: -.5px; }
.val u { color: #9aa0a6; font-size: 11px; }
.dis .val, .dis .val u { color: #545b62; }
.dis .val { padding-right: 4px; }
s { width: 24px; height: 14px; border: 1px solid #d0d4da; border-radius: 7px; padding: 2px; }
s::before { content: ""; display: block; width: 8px; height: 8px; border-radius: 4px; background: #c5cad1; }
.select { width: 275px; height: 24px; border-radius: 5px; background: #191d20; color: #c5cad1; display: flex; align-items: center; justify-content: space-between; padding: 1px 7px 0 8px; }
.cfg { width: 72px; height: 24px; margin-left: 16px; border-radius: 5px; background: #343a41; color: #bfc4c9; overflow: hidden; line-height: 26px; display: flex; justify-content: center; letter-spacing: -.4px; }
.tg { height: 40px; display: flex; align-items: center; justify-content: space-between; padding: 0 26px 0 16px; }
.tg.first { margin-top: 8px; }
.tg.rev { height: 36px; }
.tg.hum { color: #a8acb0; }
.hum s { opacity: .6; }
.steps { height: 4px; margin: 6px 18px; background: #3a4049; border-radius: 2px; display: flex; justify-content: space-between; align-items: center; }
.steps i { width: 12px; height: 12px; border-radius: 6px; background: #3a4049; }
.steps i:first-child { background: #545b62; }
.marks { display: flex; justify-content: space-between; height: 34px; line-height: 34px; padding: 0 16px; color: #3a4047; }
.marks span:nth-child(2) { margin-left: -2px; }
.row.low { height: 20px; padding-left: 16px; }
.marks.short { height: 30px; line-height: 30px; width: 308px; }
.scroll { position: absolute; right: 0; top: 176px; width: 4px; height: 554px; border-radius: 2px; background: #3d434b; }
.pfoot { flex: 1; display: flex; justify-content: space-between; padding: 16px 16px 0; background: #21272e; color: #c5cad1; letter-spacing: -.2px; position: relative; }
.pfoot span { height: 24px; border-radius: 5px; background: #343a41; line-height: 26px; width: 72px; text-align: center; position: relative; }
.pfoot .kf { width: 152px; letter-spacing: -.3px; }
.kf em { position: absolute; right: 0; top: -8px; width: 32px; height: 16px; border-radius: 7px 7px 0 7px; line-height: 17px; text-align: center; letter-spacing: .4px; }

/* timeline */
.tbar { height: 40px; align-items: center; padding: 0 33px 0 4px; color: #c5cad1; }
.tbar svg { width: 40px; height: 16px; flex: none; }
.tbar svg.n { width: 32px; }
.tbar svg.big { height: 18px; }
.tbar svg.huge { height: 22px; }
.tbar .off { color: #4c535a; }
.tbar .grn { color: #4fe0bd; }
.vr { width: 1px; height: 16px; background: #30363d; margin: 0 8px 0 12px; }
.tbar svg.zo { margin-right: -2px; height: 17px; }
.tbar svg.zi { width: 37px; height: 17px; }
.zoom { width: 90px; height: 3px; background: #252b31; position: relative; }
.zoom q { width: 25px; height: 3px; background: #c5cad1; }
.zoom i { left: 25px; width: 11px; }
.tbar svg.meter { width: 14px; height: 24px; margin: 0 14px 0 46px; }
.tbody { flex: 1; display: flex; }
.heads { width: 128px; }
.heads > div { display: flex; align-items: center; color: #c5cad1; padding-left: 10px; }
.heads .h0 { height: 32px; padding-left: 12px; gap: 16px; }
.heads .h0 svg { width: 16px; height: 16px; }
.heads .grn { color: #4fe0bd; }
.heads .h1 { height: 70px; background: #1e2427; }
.heads .h2 { height: 70px; }
.h3 { height: 45px; }
.heads .dk, .lane.dk { background: #1e2427; }
.heads .ic { width: 14px; height: 14px; color: #eef0f2; }
.heads span { width: 19px; padding-left: 1px; font-size: 11px; }
.heads .i { width: 14px; height: 14px; }
.heads .sk { margin-left: 18px; }
.heads .ey { margin-left: 16px; }
.lanes { flex: 1; position: relative; overflow: hidden; }
.ruler { height: 32px; position: relative; }
.ruler i { position: absolute; bottom: 0; width: 1px; height: 5px; background: #b5babf; }
.ruler i.mj { height: 10px; }
.ruler span { position: absolute; top: 6px; width: 80px; margin-left: -40px; text-align: center; letter-spacing: -.66px; color: #c5cad1; }
.lane { height: 45px; position: relative; }
.lane.empty { height: 70px; background: #1e2427; }
.lane.video { height: 70px; }
.clip { position: absolute; top: 2px; height: 41px; border-radius: 5px; background: #16322c; border: 1px solid #214f44; overflow: hidden; }
.clip::before { content: ""; position: absolute; left: 0; top: 0; width: 4px; height: 100%; background: #28574c; clip-path: polygon(0 0, 100% 0, 0 100%); }
.clip > svg { position: absolute; left: -1px; bottom: 0; fill: #48bfa5; }
.clip .ln { position: absolute; left: 0; right: 0; height: 2px; background: #84ecd3; }
.clip .mi { position: absolute; left: 8px; top: 8px; }
.clip b { position: absolute; left: 27px; top: 6px; font-weight: 400; letter-spacing: -.3px; color: #f1f3f5; text-shadow: 0 0 2px #16322c; }
.clip.fin { background: #0b0f12; border: 2px solid #fff; border-radius: 3px; }
.clip.fin::before { content: none; }
.shade { position: absolute; left: 0; top: 0; bottom: 0; width: 40px; background: linear-gradient(90deg, #1a1d1f88, transparent); }
.vs { position: absolute; right: 0; top: 32px; width: 12px; height: 317px; border-radius: 5px; background: #373d45; }
.hs { position: absolute; left: 0; bottom: 0; width: 697px; height: 12px; border-radius: 6px; background: #3a4047; }
.playhead { position: absolute; left: 1327px; top: 0; bottom: 0; width: 2px; background: #ff6565; }
.ph1 { position: absolute; left: -5px; top: 0; fill: #ff6565; }
.cut { position: absolute; left: -10px; top: 73px; width: 22px; height: 35px; border-radius: 11px; background: #ff5f62; display: grid; place-items: center; }
.cut svg { fill: none; stroke: #fff; stroke-width: 1.2; }

/* taskbar */
.taskbar { height: 48px; flex: none; margin-top: 1px; display: flex; position: relative; border-top: 1px solid #4b7a48; color: #fff; letter-spacing: 0; background: radial-gradient(ellipse 420px 60px at 1690px 60px, #55c24e, transparent), linear-gradient(180deg, #0d3a0b44, transparent), linear-gradient(90deg, #062405, #13400f 110px, #1e5a1c 300px, #2b6e2a 480px, #2e7a2f 640px, #318430 800px, #2c6a28 900px, #37822f 1100px, #43973c 1300px, #48a943 1550px, #41a03c 1919px); }
.weather { width: 565px; display: flex; padding: 8px 0 0 17px; position: relative; letter-spacing: -.25px; }
.weather svg { margin-top: -1px; }
.weather div { padding-left: 3px; }
.weather b { position: absolute; left: 35px; top: 6px; font-weight: 400; font-size: 11px; color: #3a1518; }
.weather p { line-height: 16px; }
.weather p + p { color: #dfe8df; }
.apps { display: flex; }
.apps span { width: 44px; height: 45px; display: grid; place-items: center; position: relative; }
.apps svg { width: 24px; height: 24px; }
.apps .run::after, .apps .act::after { content: ""; position: absolute; bottom: 2px; left: 19px; width: 6px; height: 3px; border-radius: 2px; background: #b5cdb3; }
.apps .act::before { content: ""; position: absolute; left: 2px; top: 3px; width: 40px; height: 40px; border-radius: 4px; background: #ffffff1a; border: 1px solid #ffffff18; }
.apps .act svg { position: relative; }
.apps .act::after { left: 14px; width: 16px; background: #4cc2ff; }
.tray { display: flex; align-items: center; margin-left: 263px; height: 46px; }
.w { fill: none; stroke: #fff; stroke-width: 1.4; margin-right: 6px; flex: none; }
.tray .tc1 { margin: 0 20px 0 0; }
.por { width: 41px; letter-spacing: -.3px; padding-top: 1px; }
.clock { width: 72px; text-align: right; margin-right: 8px; letter-spacing: -.3px; }
.bell { margin-right: 17px; }
.cop { position: relative; height: 22px; }
.cop b { position: absolute; left: 6px; bottom: -2px; background: #ffc61a; color: #111; border-radius: 2px; font: bold 7px/8px "Open Sans", sans-serif; padding: 0 2px; }
```
FILE: app.js
```js
// Media library entries: [duration, file name]
const media = [
  ["00:00:03", "speech_2024040..."], ["00:00:01", "Chamada"], ["00:00:08", "06-finalizando"], ["00:00:06", "05-agradecimen..."],
  ["00:00:13", "04-sugestões"], ["00:02:03", "03-conteúdo"], ["00:00:12", "02-tema"], ["00:00:17", "01-intro"], ["00:01:51", "Headphones - R..."],
  ["00:02:07", "Everglow - Patri..."], ["00:02:05", "2 Hearts - Patric..."], ["00:02:56", "Monogram - Pa..."], ["00:04:03", "Nothing On Me ..."], ["00:00:05", "cambio-desligo"],
  ["00:00:01", "Stones and Wat..."]
];
const note = '<svg viewBox="0 0 20 20"><use href="#note"/></svg>';
document.getElementById("grid").insertAdjacentHTML("beforeend", media.map(([t, n], k) => {
  const sel = k === media.length - 1;
  return `<div class="cell"><div class="thumb${sel ? " sel" : ""}"><span class="sq">${note}</span><span class="t">${t}</span><svg class="i no"><use href="#noteo"/></svg><svg class="ck"><use href="#check"/></svg></div><p${sel ? ' class="on"' : ""}>${n}</p></div>`;
}).join(""));

// Ruler: one label every 30 s, a small tick every 6 s.
// The label at the origin is half hidden by the track headers, so only its visible part is written.
const two = n => String(n).padStart(2, "0");
const STEP = 153.55;
let ruler = "";
for (let k = 0; k <= 44; k++) {
  const x = Math.round(k * STEP / 5);
  ruler += `<i class="${k % 5 ? "" : "mj"}" style="left:${x}px"></i>`;
  if (k === 0) ruler += '<span style="left:40px;text-align:left">:00:00</span>';
  else if (k % 5 === 0) {
    const s = k * 6;
    ruler += `<span style="left:${x}px">00:${two(Math.floor(s / 60))}:${two(s % 60)}:00</span>`;
  }
}
document.getElementById("ruler").innerHTML = ruler;

// Clips: [start, end, volume line offset, waveform kind, icon, label]
// kinds: s = speech, S = loud speech, m = quiet music, M = medium music, L = loud music
const tracks = {
  a1: [[147, 156, 10, "S"], [157, 172, 9, "S"]],
  a2: [[136, 149, 12, "L"], [149, 174, 21, "M", 1], [174, 204, 11, "L", 1], [224, 314, 10, "s", 1, "01-intro"], [366, 431, 8, "S", 1, "02-te..."],
    [452, 573, 12, "s", 1, "03-conteúdo"], [581, 699, 12, "s", 1, "03-conteúdo"], [706, 839, 12, "s", 1, "03-conteúdo"], [849, 951, 12, "s", 1, "03-conteúdo"],
    [963, 1122, 12, "s", 1, "03-conteúdo"], [1179, 1249, 9, "S", 1, "04-su..."], [1249, 1255, 14, "s"], [1287, 1320, 10, "S", 1], [1364, 1405, 10, "S", 1]],
  a3: [[204, 224, 14, "S"], [224, 314, 22, "M", 1, "Everglow ..."], [314, 354, 15, "L", 1], [354, 366, 14, "L"], [366, 431, 24, "M", 1, "Mon..."], [431, 452, 15, "L"],
    [452, 573, 27, "m", 1, "Monogram - Pat..."], [573, 584, 16, "S"], [584, 699, 27, "m", 1, "Monogram - P..."], [699, 709, 14, "L"], [709, 839, 27, "m", 1, "Monogram - Patri..."],
    [839, 851, 16, "s"], [851, 951, 27, "m", 1, "Monogram ..."], [951, 964, 17, "L"], [964, 1124, 27, "m", 1, "Monogram - Patrick Pat..."], [1124, 1162, 14, "L", 1], [1162, 1179, 14, "L"],
    [1179, 1255, 23, "M", 1, "Nothin..."], [1255, 1287, 16, "L", 1], [1287, 1320, 25, "M", 1], [1321, 1346, 14, "L", 1], [1347, 1364, 14, "L"], [1364, 1404, 24, "M", 1],
    [1405, 1429, 16, "L"], [1430, 1458, 14, "S", 1], [1458, 1464, 0, "x"]]
};
let seed = 7;
const rnd = () => (seed = (seed * 16807) % 2147483647) / 2147483647;
function wave(w, kind) {
  let d = "M0 40";
  let env = 1, left = 0, len = 1;
  for (let x = 0; x < w; x++) {
    if (left-- <= 0) { env = .55 + rnd() * .45; len = left = 8 + Math.floor(rnd() * 16); }
    const arc = Math.max(0, Math.sin(Math.PI * Math.max(0, left) / len));
    const burst = env * Math.sqrt(arc) * (.45 + .55 * rnd());
    const h = kind === "s" ? 1 + 18 * burst
      : kind === "S" ? 2 + 26 * burst
      : kind === "m" ? 2.5 + rnd() * 1.8
      : kind === "M" ? 4.5 + rnd() * 5 * env + arc * 1.5
      : 17 + rnd() * 5 + 6 * arc * env;
    d += `V${(40 - h).toFixed(1)}h1`;
  }
  return `<svg width="${w}" height="40"><path d="${d}V40z"/></svg>`;
}
for (const id in tracks) {
  document.getElementById(id).innerHTML = tracks[id].map(([a, b, y, kind, icon, label]) => {
    const pos = `style="left:${a - 136}px;width:${b - a}px"`;
    if (kind === "x") return `<div class="clip fin" ${pos}></div>`;
    return `<div class="clip" ${pos}>${wave(b - a, kind)}<i class="ln" style="top:${y}px"></i>` +
      (icon ? `<span class="mi">${note}</span>` : "") + (label ? `<b>${label}</b>` : "") + "</div>";
  }).join("");
}
```
